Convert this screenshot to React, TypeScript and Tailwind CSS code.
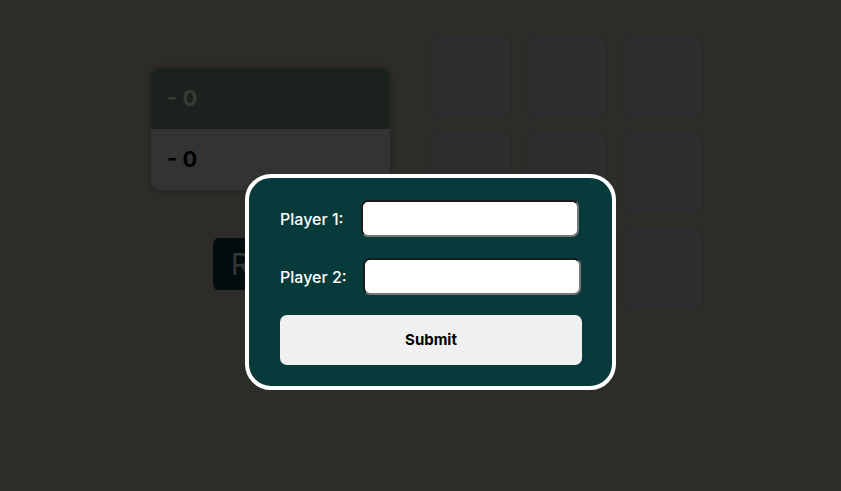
import React from "react";

const cells = Array.from({ length: 9 });

function Scoreboard() {
  return (
    <div className="flex flex-col items-center">
      <div className="w-[241px] rounded-[10px] overflow-hidden border border-[#292825] shadow-[0_0_4px_rgba(0,0,0,0.25)]">
        <div className="h-[61px] bg-[#1b221d] flex items-center pl-[16px] text-[22px] font-bold text-[#383b36]">
          - 0
        </div>
        <div className="h-[61px] bg-[#333333] flex items-center pl-[16px] text-[22px] font-bold text-black">
          - 0
        </div>
      </div>
      <button className="mt-[47px] h-[52px] px-[18px] rounded-[6px] bg-[#030c0c] text-[30px] text-[#333636] font-normal leading-none">
        Reset
      </button>
    </div>
  );
}

function Board() {
  return (
    <div className="grid grid-cols-3 gap-[14px]">
      {cells.map((_, i) => (
        <div
          key={i}
          className="w-[82px] h-[82px] rounded-[10px] bg-[#2c2d2f] border border-[#282826]"
        />
      ))}
    </div>
  );
}

function NamesModal() {
  return (
    <div className="fixed left-[245px] top-[174px] w-[371px] h-[216px] rounded-[26px] border-4 border-white bg-[#073b3b] px-[31px] pt-[22px]">
      <div className="flex items-center h-[37px]">
        <label className="text-[16px] font-medium text-white w-[81px] pt-[1px]">Player 1:</label>
        <input className="w-[218px] h-[37px] rounded-[7px] bg-white border-2 border-t-[#1a1a1a] border-l-[#1a1a1a] border-b-[#777777] border-r-[#777777]" />
      </div>
      <div className="flex items-center h-[37px] mt-[21px]">
        <label className="text-[16px] font-medium text-white w-[83px] pt-[1px]">Player 2:</label>
        <input className="w-[218px] h-[37px] rounded-[7px] bg-white border-2 border-t-[#1a1a1a] border-l-[#1a1a1a] border-b-[#777777] border-r-[#777777]" />
      </div>
      <button className="mt-[20px] w-[302px] h-[50px] rounded-[7px] bg-[#f0f0f0] text-[15px] font-bold text-black">
        Submit
      </button>
    </div>
  );
}

export default function App() {
  return (
    <div
      className="w-[841px] h-[491px] bg-[#2e2c28] relative overflow-hidden"
      style={{ fontFamily: 'Inter, "Liberation Sans", sans-serif' }}
    >
      <div className="flex items-start gap-[39px] pl-[150px] pt-[35px]">
        <div className="pt-[32px]">
          <Scoreboard />
        </div>
        <Board />
      </div>
      <NamesModal />
    </div>
  );
}
